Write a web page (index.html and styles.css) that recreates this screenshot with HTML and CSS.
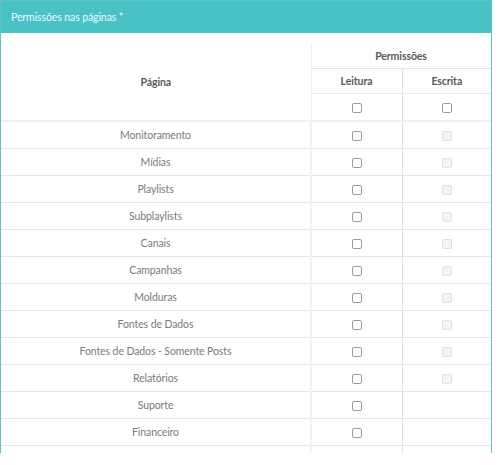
FILE: index.html
```html
<!DOCTYPE html>
<html lang="pt">
<head>
<meta charset="utf-8">
<link rel="stylesheet" href="styles.css">
</head>
<body>
<div class="panel">
  <div class="panel-heading">Permissões nas páginas *</div>
  <div class="panel-body">
    <table class="perm">
      <colgroup><col class="c-page"><col class="c-read"><col class="c-write"></colgroup>
      <thead>
        <tr><th rowspan="3" class="th-page">Página</th><th colspan="2" class="th-group">Permissões</th></tr>
        <tr><th class="th-sub">Leitura</th><th class="th-sub">Escrita</th></tr>
        <tr><th class="th-chk"><input type="checkbox" class="chk"></th><th class="th-chk"><input type="checkbox" class="chk"></th></tr>
      </thead>
      <tbody>
        <tr><td>Monitoramento</td><td><input type="checkbox" class="chk"></td><td><input type="checkbox" class="chk" disabled></td></tr>
        <tr><td>Mídias</td><td><input type="checkbox" class="chk"></td><td><input type="checkbox" class="chk" disabled></td></tr>
        <tr><td>Playlists</td><td><input type="checkbox" class="chk"></td><td><input type="checkbox" class="chk" disabled></td></tr>
        <tr><td>Subplaylists</td><td><input type="checkbox" class="chk"></td><td><input type="checkbox" class="chk" disabled></td></tr>
        <tr><td>Canais</td><td><input type="checkbox" class="chk"></td><td><input type="checkbox" class="chk" disabled></td></tr>
        <tr><td>Campanhas</td><td><input type="checkbox" class="chk"></td><td><input type="checkbox" class="chk" disabled></td></tr>
        <tr><td>Molduras</td><td><input type="checkbox" class="chk"></td><td><input type="checkbox" class="chk" disabled></td></tr>
        <tr><td>Fontes de Dados</td><td><input type="checkbox" class="chk"></td><td><input type="checkbox" class="chk" disabled></td></tr>
        <tr><td>Fontes de Dados - Somente Posts</td><td><input type="checkbox" class="chk"></td><td><input type="checkbox" class="chk" disabled></td></tr>
        <tr><td>Relatórios</td><td><input type="checkbox" class="chk"></td><td><input type="checkbox" class="chk" disabled></td></tr>
        <tr><td>Suporte</td><td><input type="checkbox" class="chk"></td><td></td></tr>
        <tr><td>Financeiro</td><td><input type="checkbox" class="chk"></td><td></td></tr>
        <tr><td></td><td></td><td></td></tr>
      </tbody>
    </table>
  </div>
</div>
</body>
</html>
```
FILE: styles.css
```css
html, body { margin: 0; padding: 0; background: #fff; }
body { font-family: Lato, "Open Sans", sans-serif; font-size: 10.5px; letter-spacing: -0.1px; color: #7a7a7a; }
.panel {
  width: 490px;
  height: 452px;
  border: 1px solid #5cc3c6;
  border-bottom: none;
  overflow: hidden;
}
.panel-heading {
  background: #48c2c5;
  color: #eefafa;
  height: 32px;
  line-height: 32px;
  padding-left: 10px;
  border-top: 1px solid #3eb2b5;
  margin-top: -1px;
  font-size: 10.5px;
}
.panel-body { padding-top: 10px; }
.perm { width: 490px; border-collapse: collapse; table-layout: fixed; }
.c-page { width: 310px; }
.c-read { width: 91px; }
.c-write { width: 89px; }
.perm th, .perm td { padding: 0; text-align: center; vertical-align: middle; }
.perm th { color: #5a5a5a; font-weight: bold; font-size: 10.5px; }
.th-page { border-right: 1px solid #ececec; border-bottom: 2px solid #f0f0f0; }
.th-group { height: 25px; border-right: 1px solid #ddd; border-bottom: 1px solid #e3e3e3; }
.th-sub { height: 24px; border-bottom: 1px solid #e8e8e8; }
.th-sub + .th-sub { border-left: 1px solid #e0e0e0; }
.th-chk { height: 26px; border-bottom: 2px solid #f0f0f0; }
.th-chk + .th-chk { border-left: 1px solid #e0e0e0; }
.perm td { height: 26px; border-bottom: 1px solid #e6e6e6; }
.perm td:first-child { border-right: 2px solid #f3f3f3; }
.perm td:nth-child(3) { border-left: 1px solid #e0e0e0; }
.chk {
  -webkit-appearance: none;
  appearance: none;
  width: 10px;
  height: 10px;
  margin: 0;
  border: 1px solid #9a9a9a;
  border-radius: 2px;
  background: #fff;
  display: inline-block;
  vertical-align: middle;
}
.chk:disabled { border-color: #e0e0e0; background: #f4f4f4; }
```
